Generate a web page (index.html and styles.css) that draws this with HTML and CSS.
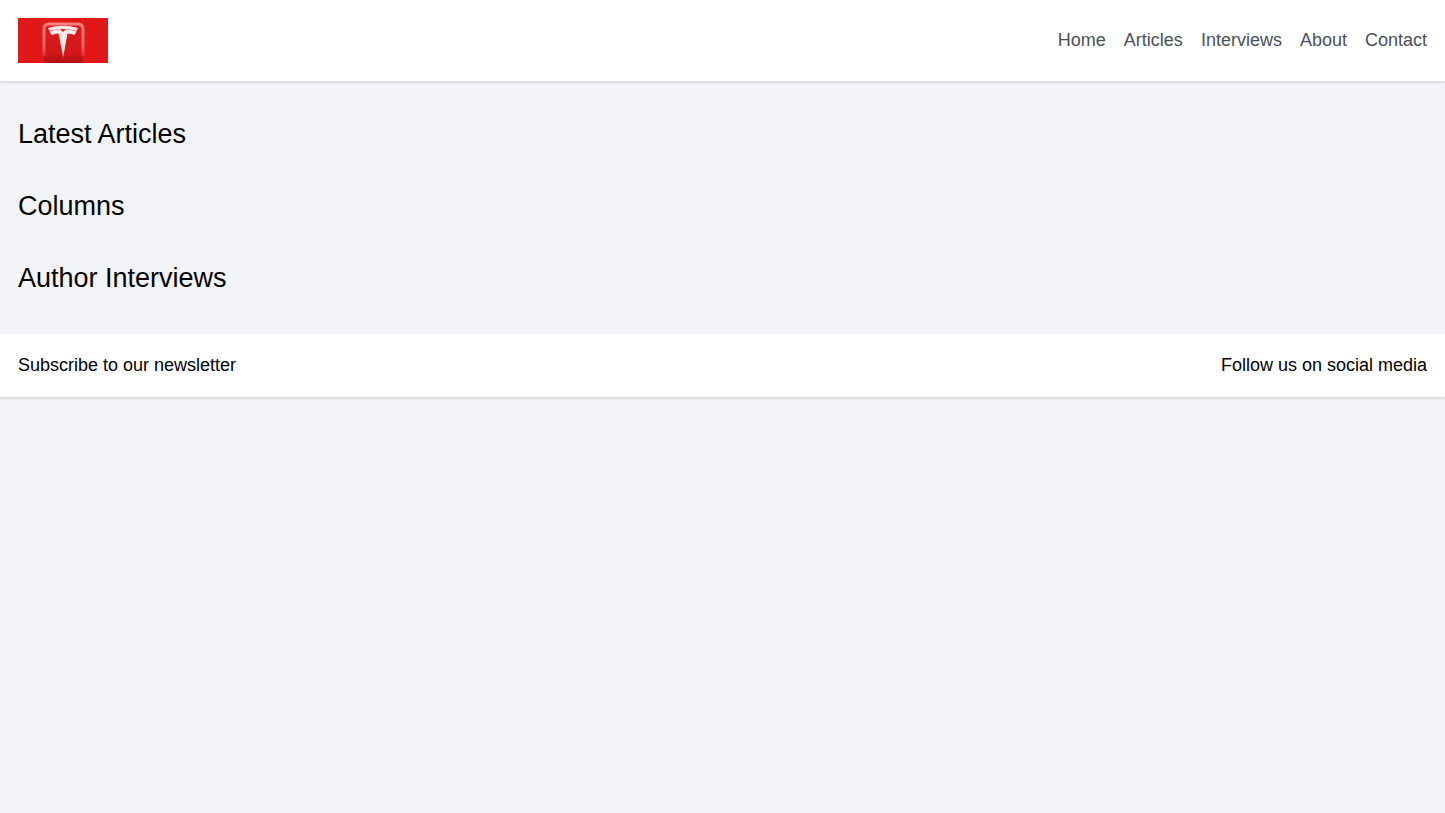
FILE: index.html
```
<!DOCTYPE html>
<html lang="en">
<head>
    <meta charset="UTF-8">
    <title>Latest Articles</title>
    <link rel="stylesheet" href="styles.css">
</head>
<body>
    <header class="bar">
        <svg class="logo" viewBox="0 0 90 45" role="img" aria-label="Logo">
            <defs>
                <linearGradient id="shade" x1="0" y1="0" x2="0" y2="1">
                    <stop offset="0" stop-color="#dc1a1b"/>
                    <stop offset="0.75" stop-color="#d41718"/>
                    <stop offset="1" stop-color="#b01011"/>
                </linearGradient>
                <linearGradient id="edge" gradientUnits="userSpaceOnUse" x1="0" y1="5" x2="0" y2="40">
                    <stop offset="0" stop-color="#f58080"/>
                    <stop offset="0.7" stop-color="#ee6060"/>
                    <stop offset="1" stop-color="#e01819"/>
                </linearGradient>
                <filter id="soft" x="-10%" y="-10%" width="120%" height="120%">
                    <feGaussianBlur stdDeviation="0.6"/>
                </filter>
            </defs>
            <rect width="90" height="45" fill="#e01819"/>
            <path d="M26 45V10q0-4 4-4h30q5 0 5 4v35z" fill="url(#shade)"/>
            <path d="M26 38V11q0-5 5-5h29q5 0 5 5v27" fill="none" stroke="url(#edge)" stroke-width="3" filter="url(#soft)"/>
            <path d="M30 10Q45 5.500 60 10L58.500 13Q45 9 31.500 13Z" fill="#ffe9e6"/>
            <path d="M31.500 13.500Q37 11.500 42 11.300L45 14L48 11.300Q53 11.500 58.500 13.500L56.500 17Q53 15.500 49.500 15.500L45.200 39L40.500 15.500Q37 15.500 33.500 17Z" fill="#ffe9e6"/>
        </svg>
        <nav class="nav">
            <a href="#">Home</a>
            <a href="#articles">Articles</a>
            <a href="#interviews">Interviews</a>
            <a href="#about">About</a>
            <a href="#contact">Contact</a>
        </nav>
    </header>

    <main class="content">
        <section class="section" id="articles">
            <h2>Latest Articles</h2>
        </section>
        <section class="section" id="columns">
            <h2>Columns</h2>
        </section>
        <section class="section" id="interviews">
            <h2>Author Interviews</h2>
        </section>
    </main>

    <footer class="bar">
        <p>Subscribe to our newsletter</p>
        <p>Follow us on social media</p>
    </footer>
</body>
</html>
```
FILE: styles.css
```
body {
    margin: 0;
    min-height: 100vh;
    background: #f3f4f8;
    color: #000;
    font-family: "Liberation Sans", Arial, sans-serif;
    font-size: 18px;
    line-height: 27px;
}

.bar {
    display: flex;
    justify-content: space-between;
    align-items: center;
    padding: 18px;
    background: #fff;
    border-bottom: 1px solid #dfe0e4;
    box-shadow: 0 1px 2px rgba(0, 0, 0, 0.1);
}

.bar p {
    margin: 0;
}

.logo {
    display: block;
    width: 90px;
    height: 45px;
}

.nav {
    display: flex;
    gap: 18px;
}

.nav a {
    color: #4b5058;
    text-decoration: none;
}

.nav a:hover {
    color: #000;
}

.content {
    padding: 16px 18px 20px;
}

.section {
    padding: 18px 0;
}

.section h2 {
    margin: 0;
    font-size: 27px;
    font-weight: 400;
    line-height: 36px;
}
```
